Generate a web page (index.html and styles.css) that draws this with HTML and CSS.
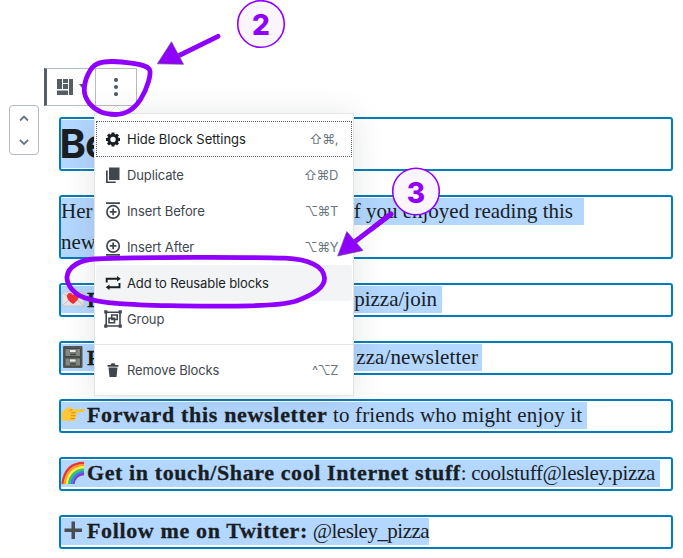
FILE: index.html
```html
<!DOCTYPE html>
<html lang="en">
<head>
<meta charset="utf-8">
<title>Block editor</title>
<link rel="stylesheet" href="styles.css">
</head>
<body>
<main class="editor">
  <div class="topbar">
    <div class="mover">
      <svg width="28" height="48" viewBox="0 0 28 48"><path d="M10 14.500l4-4 4 4M10 34l4 4 4-4"/></svg>
    </div>
    <div class="toolbar">
      <div class="tool type">
        <svg width="30" height="18" viewBox="0 0 30 18"><path d="M0 1h5v10H0zM6 1h5v4H6zM6 6h5v5H6zM12 1h4v16h-4zM0 12.500h11V17H0zM22 6h6l-3 4z"/></svg>
      </div>
      <div class="tool more">
        <svg width="6" height="18" viewBox="0 0 6 18"><circle cx="3" cy="2" r="2.100"/><circle cx="3" cy="9" r="2.100"/><circle cx="3" cy="16" r="2.100"/></svg>
      </div>
    </div>
  </div>

  <section class="blocks">
    <h1 class="block heading"><span class="mark">Be</span></h1>
    <div class="block para">
      <p class="mark l1"><span>Her</span><span class="t1">f you enjoyed reading this</span></p>
      <p class="mark l2"><span>new</span></p>
    </div>
    <div class="block"><p class="mark l3">
      <svg class="emoji" viewBox="0 0 24 24"><path d="M1 4h22v14H1z" fill="#e6e4e4" stroke="#c5c2c4" stroke-width=".8"/><path d="M1 18l9-8M23 18l-9-8M1 4l11 9 11-9" fill="none" stroke="#c4c0c4"/><path d="M12 16C3.500 10.500 5.500 5 9 5c2 0 3 2 3 2s1-2 3-2c3.500 0 5.500 5.500-3 11z" fill="#f02f38"/></svg>
      <b class="t3a">F</b><span class="t3">pizza/join</span></p></div>
    <div class="block"><p class="mark l4">
      <svg class="emoji" viewBox="0 0 24 24"><rect x="2" y="0" width="19.500" height="22" rx="1" fill="#555956"/><path d="M4 2.500h15.500v8H4zM4 12h15.500v8H4z" fill="#858986" stroke="#3c403e" stroke-width=".8"/><path d="M8.500 3.500h6.500v3H8.500zM8.500 13h6.500v3H8.500z" fill="#eee" stroke="#555" stroke-width=".6"/><path d="M9 8.500h6M9 18h6" stroke="#424644" stroke-width="1.300"/></svg>
      <b class="t3a">F</b><span class="t4">zza/newsletter</span></p></div>
    <div class="block"><p class="mark l5">
      <svg class="emoji hand" viewBox="0 0 24 24"><path d="M.5 9c3-.5 4-5 8-5 2 0 3 1.500 2.500 2.500l11.500-.5c1.500.1 1.500 3 0 3l-8 .7c2 1 1.500 2.600.2 3 1.200 1 .6 2.600-.7 2.800.3 1.300-.6 2.500-2 2.500-4 .5-5-.8-8-.5H.5z" fill="#ffc638"/><path d="M8.500 7.500l3-1M10 10l4.500-.3M10 12.800l4.500-.1M9.500 15.500h4.500" fill="none" stroke="#dd8b18"/></svg>
      <span class="t5"><b>Forward this newsletter</b><i> to friends who might enjoy it</i></span></p></div>
    <div class="block"><p class="mark l6">
      <svg class="emoji hand" viewBox="0 0 24 24"><g fill="none" stroke-width="2.300"><path d="M1.500 23C3 10 10 2 23 2" stroke="#ee3533"/><path d="M3.700 23C5 11.500 12 4.200 23 4.200" stroke="#ff9d22"/><path d="M5.900 23C7 13 13 6.400 23 6.400" stroke="#fff13b"/><path d="M8.100 23C9 14.500 15 8.600 23 8.600" stroke="#35c853"/><path d="M10.300 23C11 16 16 10.800 23 10.800" stroke="#268ee8"/><path d="M12.500 23C13 17.500 17 13 23 13" stroke="#833bd1"/></g></svg>
      <span class="t6"><b>Get in touch/Share cool Internet stuff</b><i>: coolstuff@lesley.pizza</i></span></p></div>
    <div class="block"><p class="mark l7">
      <svg class="emoji plus" viewBox="0 0 24 24"><path d="M10.500 3.500h3.500v7h7V14h-7v7h-3.500v-7h-7v-3.500h7z" fill="#4b4d51"/></svg>
      <span class="t7"><b>Follow me on Twitter:</b><i> @lesley_pizza</i></span></p></div>
  </section>

  <nav class="menu">
    <div class="group">
      <div class="item focus">
        <svg viewBox="0 0 20 20"><circle cx="10" cy="10.500" r="4.200" fill="none" stroke="currentColor" stroke-width="3"/><path d="M10 3.500v3M10 14.500v3M3 10.500h3M14 10.500h3M5 5.500l2 2M13 13.500l2 2M15 5.500l-2 2M7 13.500l-2 2" stroke="currentColor" stroke-width="3"/></svg>
        <span>Hide Block Settings</span><kbd>⇧⌘,</kbd></div>
      <div class="item">
        <svg viewBox="0 0 20 20"><path d="M6 2.500h10.500v12.500H6zM3 5.500h1.700v11h8V18H3z"/></svg>
        <span>Duplicate</span><kbd>⇧⌘D</kbd></div>
      <div class="item">
        <svg viewBox="0 0 20 20"><path d="M3 1.200h14v1.800H3zM9.300 7.500h1.700v2.500h2.500v1.700h-2.500v2.500H9.300v-2.500H6.800V10h2.500z"/><circle cx="10.100" cy="10.900" r="6.200" fill="none" stroke="currentColor" stroke-width="1.700"/></svg>
        <span>Insert Before</span><kbd>⌥⌘T</kbd></div>
      <div class="item">
        <svg viewBox="0 0 20 20"><path d="M3 17h14v1.800H3zM9.300 5.600h1.700v2.500h2.500v1.700h-2.500v2.500H9.300V9.800H6.800V8.100h2.500z"/><circle cx="10.100" cy="9" r="6.200" fill="none" stroke="currentColor" stroke-width="1.700"/></svg>
        <span>Insert After</span><kbd>⌥⌘Y</kbd></div>
      <div class="item hover">
        <svg viewBox="0 0 20 20"><path d="M3.700 9.500V5.800H14M16.500 10v4.200H6" fill="none" stroke="currentColor" stroke-width="1.900"/><path d="M14 3l3.800 2.800L14 8.600zM6.500 11.400v5.600l-3.800-2.800z"/></svg>
        <span>Add to Reusable blocks</span></div>
      <div class="item">
        <svg viewBox="0 0 20 20"><path d="M3.200 3.200h13.800v13.800H3.200zM8.700 6h5.500v4.500H8.700zM6 9.300h5.500v4.500H6z" fill="none" stroke="currentColor" stroke-width="1.600"/><path d="M1.200 1.200h3.200v3.200H1.200zM15.600 1.200h3.200v3.200h-3.200zM1.200 15.600h3.200v3.200H1.200zM15.600 15.600h3.200v3.200h-3.200z"/></svg>
        <span>Group</span></div>
    </div>
    <div class="group last">
      <div class="item">
        <svg viewBox="0 0 20 20"><path d="M4.500 5h3l1-1.700h3L12.500 5h3v1.800h-11zM5.500 7.600h9L13.500 17h-7z"/></svg>
        <span>Remove Blocks</span><kbd>^⌥Z</kbd></div>
    </div>
  </nav>

  <svg class="notes" width="683" height="558" viewBox="0 0 683 558">
    <path d="M110.500 111.500l5.500-5.500 5.500 5.500" fill="#fff" stroke="#e2e4e7"/>
    <g class="ink">
      <path d="M84.300 91C84 80 90 67 97 64c9-4.500 26-2 37-.5 6 1 13 2 15.500 6 2 4-2 19-9 30-6 9-15 15-25 15-12 0-21-5-26-11-3-4-5-8-5.200-12.500z"/>
      <path d="M95 259c40-2 155-2 190-.8 24 1 39 8 39.500 20 .5 10-15 18-29 23-20 6-75 5-125 4.500-39-1-69-2-86-8-11-4-18-13-17.500-21 1-10 13-17 28-17.700z"/>
      <path d="M218 36.300L174 58M391 214l-38 29"/>
    </g>
    <path class="tip" d="M157.300 63.800L171.500 41.800 183.500 64.300zM337.700 256L346.800 231.500 363 250.500z"/>
    <circle cx="261" cy="24" r="23.300"/><circle cx="416" cy="191.500" r="23.300"/>
    <text x="261" y="35">2</text><text x="416" y="202.700">3</text>
    <path class="over" d="M391 214l-20 15.300"/>
  </svg>
</main>
</body>
</html>
```
FILE: styles.css
```css
* { box-sizing: border-box; }
body { margin: 0; background: #fff; }
.editor { position: relative; width: 683px; height: 558px; overflow: hidden; padding-top: 68px; }
.topbar { height: 49px; display: flex; align-items: flex-start; padding-left: 9px; gap: 5px; }
.mover { width: 30px; height: 50px; margin-top: 37px; border: 1px solid #b5bcc2; border-radius: 4px; }
.mover path { fill: none; stroke: #6c7781; stroke-width: 1.8; }
.toolbar { display: flex; width: 93px; height: 38px; border: 1px solid #b5bcc2; border-left: 3px solid #555d66; fill: #555d66; }
.tool { display: flex; align-items: center; }
.type { width: 49px; padding-left: 10px; border-right: 1px solid #b5bcc2; }
.more { flex: 1; justify-content: center; }
.blocks { display: flex; flex-direction: column; gap: 24px; padding-left: 59px; }
.block { width: 614px; height: 34px; margin: 0; border: 2px solid #007cba; border-radius: 3px; padding-top: 1px; }
.heading { height: 54px; font: 700 40px/48px Inter, sans-serif; color: #191e23; }
.para { height: 64px; }
.mark { display: flex; align-items: center; height: 27px; margin: 0; background: #b3d7ff; color: #191e23; font: 21px/27px "Liberation Serif", serif; white-space: nowrap; }
.heading .mark { width: 270px; height: 48px; font: inherit; letter-spacing: -1px; text-indent: -1.5px; }
.mark b { font-size: 22px; line-height: 20px; letter-spacing: .68px; -webkit-text-stroke: .3px #191e23; }
.mark i { font-style: normal; }
.emoji { width: 24px; height: 24px; flex: none; margin-right: 2px; }
.hand { margin-top: -2px; }
.plus { margin-top: -3px; }
.l1 { width: 523px; justify-content: space-between; padding-right: 11px; }
.l2 { width: 270px; height: 32px; padding-top: 2px; }
.l3 { width: 381px; padding-right: 5px; }
.l4 { width: 421px; padding-right: 4px; }
.l5 { width: 526px; }
.l6 { width: 599px; }
.l7 { width: 368px; }
.t3, .t4 { margin-left: auto; }
.t4 { letter-spacing: .12px; }
.t5, .t6, .t7 { height: 27px; line-height: 27px; }
.t5 i { letter-spacing: .17px; }
.t6 b { letter-spacing: .6px; }
.t6 i { letter-spacing: -.32px; }
.t7 b { letter-spacing: .64px; }
.t7 i { letter-spacing: -.52px; }
.menu { position: absolute; left: 94px; top: 113px; width: 260px; height: 283px; padding-top: 7px; background: #fff; border: 1px solid #e2e4e7; box-shadow: 0 3px 30px rgba(25,30,35,.12); font: 13px/36px Inter, sans-serif; color: #40464d; }
.group { padding: 0 1px; }
.last { margin-top: 7px; padding-top: 7px; border-top: 1px solid #e2e4e7; }
.item { display: flex; align-items: center; height: 36px; padding: 0 14px 0 7px; letter-spacing: -.12px; }
.item svg { width: 20px; height: 20px; margin-right: 4px; fill: currentColor; }
.item kbd { margin-left: auto; font: 13px Inter, "DejaVu Sans", sans-serif; letter-spacing: -.5px; color: #6c7781; }
.focus { color: #191e23; outline: 1px dotted #555d66; outline-offset: -1px; }
.focus span { letter-spacing: -.03px; }
.hover { color: #191e23; background: #f3f4f5; border-radius: 3px; }
.notes { position: absolute; left: 0; top: 0; }
.ink, .over { fill: none; stroke: #9000ff; stroke-width: 4.8; stroke-linecap: round; }
.tip { fill: #9000ff; stroke: #6c5580; stroke-width: .7; }
.notes circle { fill: #faf5ff; stroke: #9000ff; stroke-width: 1.6; }
.notes text { font: 800 28px Inter, sans-serif; fill: #9000ff; text-anchor: middle; }
```
